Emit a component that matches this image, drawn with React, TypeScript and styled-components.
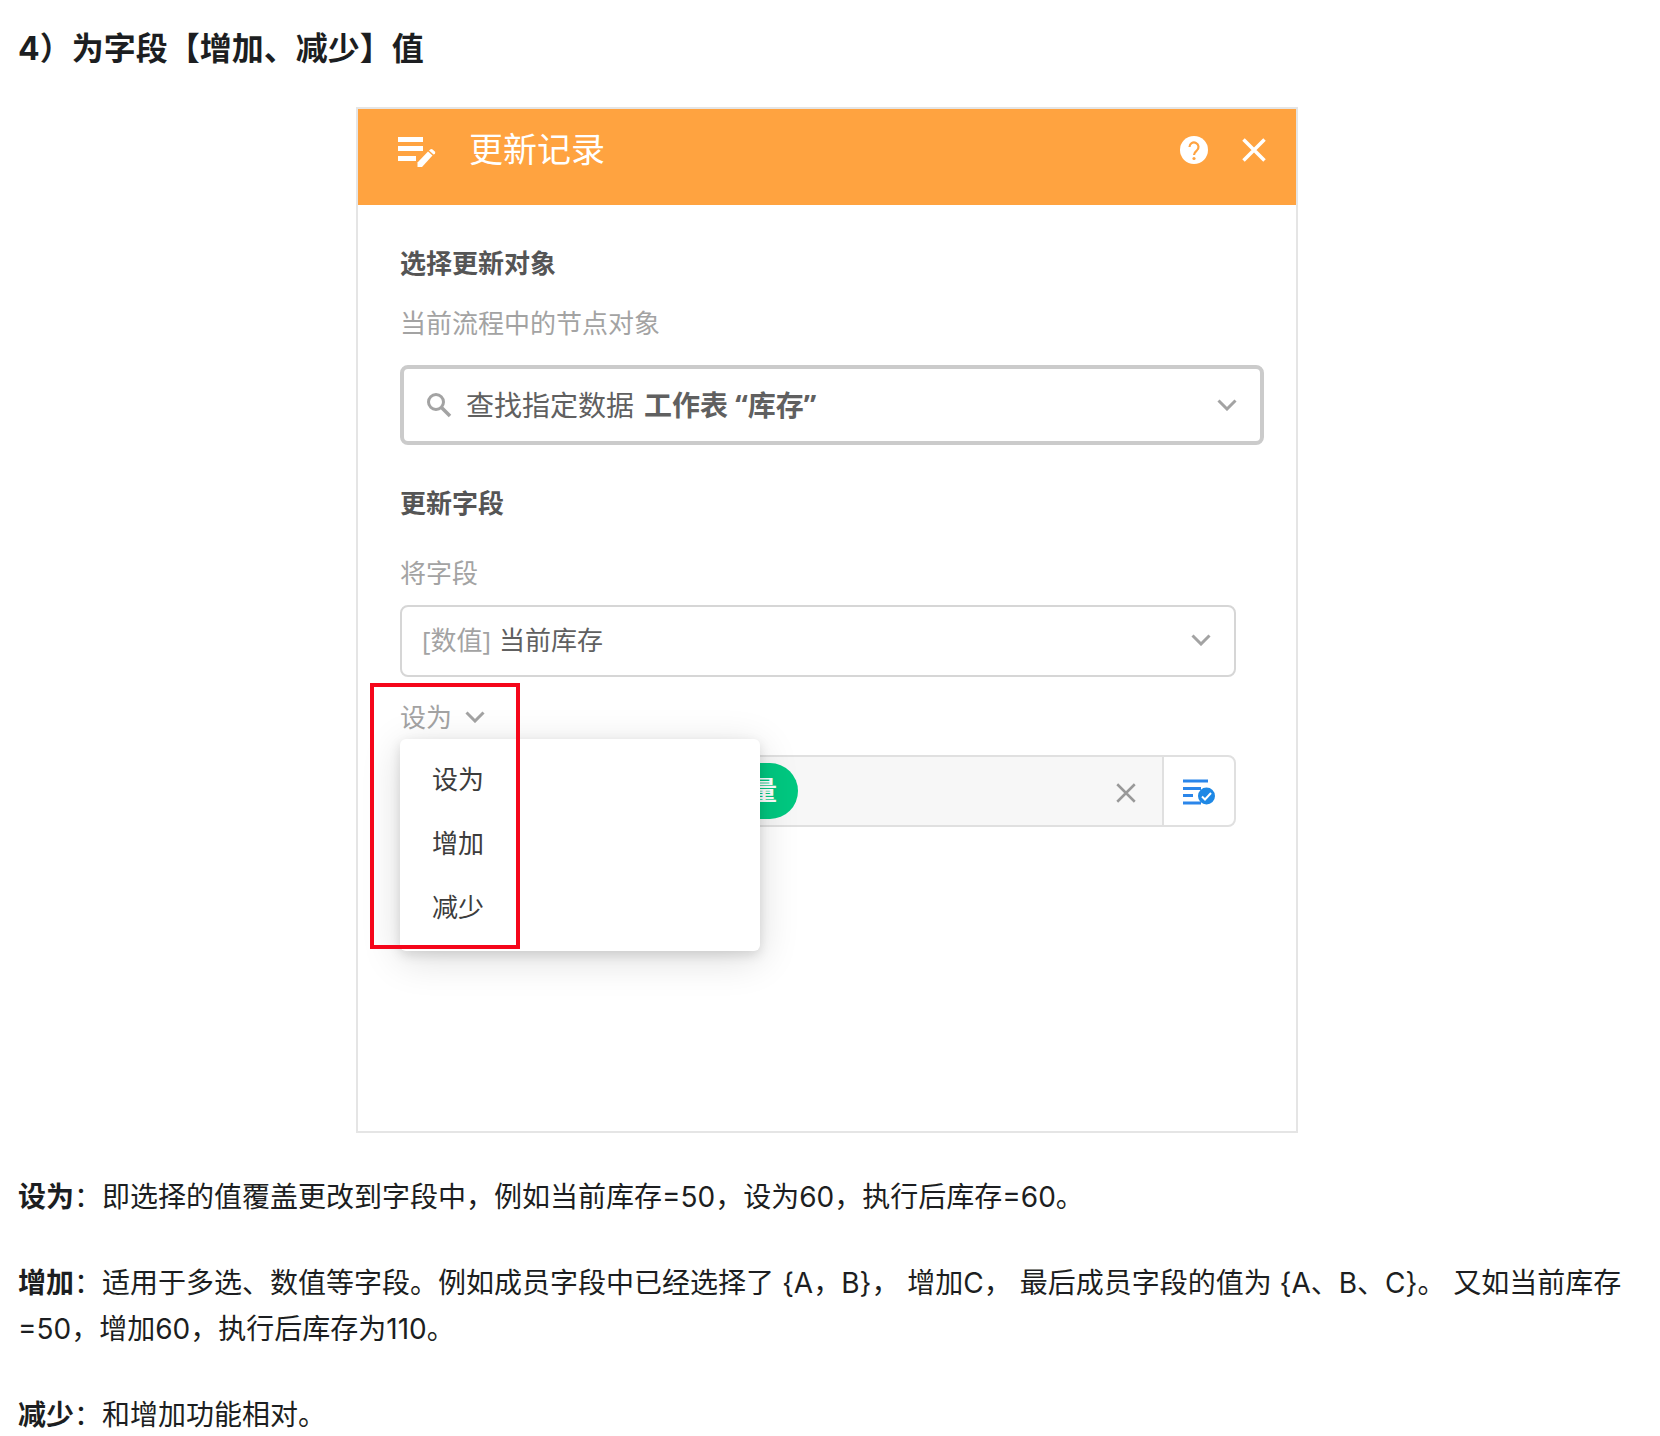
import React, { useState } from "react";
import styled, { createGlobalStyle } from "styled-components";

const GlobalStyle = createGlobalStyle`
  *, *::before, *::after { box-sizing: border-box; }
  body {
    margin: 0;
    background: #fff;
    color: #1c1e21;
    font-family: Inter, "Noto Sans CJK SC", sans-serif;
  }
  button, select, input { font: inherit; color: inherit; }
`;

const Article = styled.main`
  padding: 26px 24px 0 18px;
`;

const Heading = styled.h3`
  margin: 0 0 35px;
  font-size: 32px;
  line-height: 46px;
  font-weight: 700;
`;

const Description = styled.div`
  display: grid;
  gap: 40px;
  margin-top: 41px;
`;

const Paragraph = styled.p`
  margin: 0;
  font-size: 28px;
  line-height: 46px;
`;

const Panel = styled.section`
  width: 100%;
  max-width: 942px;
  margin: 0 auto;
  border: 2px solid #e5e5e5;
  background: #fff;
  font-family: "Open Sans", "Noto Sans CJK SC", sans-serif;
`;

const PanelHeader = styled.header`
  display: flex;
  align-items: center;
  height: 96px;
  padding: 0 30px 14px 38px;
  background: #ffa340;
  color: #fff;
`;

const PanelTitle = styled.h4`
  flex: 1;
  margin: 0 0 2px 33px;
  font-size: 34px;
  line-height: 48px;
  font-weight: 400;
`;

const IconButton = styled.button<{ $gap?: number }>`
  display: flex;
  align-items: center;
  justify-content: center;
  padding: 0;
  margin-left: ${(p) => p.$gap ?? 0}px;
  border: 0;
  background: none;
  cursor: pointer;
`;

const PanelBody = styled.div`
  padding: 40px 32px 304px 42px;
`;

const SectionTitle = styled.h5<{ $top?: number }>`
  margin: ${(p) => p.$top ?? 0}px 0 0;
  font-size: 26px;
  line-height: 36px;
  font-weight: 700;
  color: #555;
`;

const Hint = styled.label<{ $top: number; $bottom: number }>`
  display: block;
  margin: ${(p) => p.$top}px 0 ${(p) => p.$bottom}px;
  font-size: 26px;
  line-height: 36px;
  color: #a3a3a3;
`;

const FieldGroup = styled.div`
  margin-right: 28px;
`;

const SelectBox = styled.div<{ $strong?: boolean }>`
  display: flex;
  align-items: center;
  height: ${(p) => (p.$strong ? 80 : 72)}px;
  padding: ${(p) => (p.$strong ? "0 23px 0 22px" : "0 23px 2px 20px")};
  border: ${(p) => (p.$strong ? "4px solid #cbcbcb" : "2px solid #d6d6d6")};
  border-radius: 8px;
  font-size: ${(p) => (p.$strong ? 28 : 26)}px;
  line-height: 40px;
  color: #606060;
`;

const Prefix = styled.span<{ $muted?: boolean }>`
  margin-left: ${(p) => (p.$muted ? 0 : 14)}px;
  margin-right: ${(p) => (p.$muted ? 8 : 10)}px;
  color: ${(p) => (p.$muted ? "#a3a3a3" : "inherit")};
`;

const Select = styled.select<{ $bold?: boolean }>`
  flex: 1;
  min-width: 0;
  height: 44px;
  padding: 0;
  border: 0;
  outline: 0;
  appearance: none;
  background: none;
  font-weight: ${(p) => (p.$bold ? 700 : 400)};
`;

const Operator = styled.div`
  position: relative;
  margin: 22px 0 20px;
`;

const OperatorButton = styled.button`
  display: flex;
  align-items: center;
  gap: 13px;
  padding: 0;
  border: 0;
  background: none;
  font-size: 26px;
  line-height: 36px;
  color: #a3a3a3;
  cursor: pointer;
`;

const Menu = styled.ul`
  position: absolute;
  z-index: 2;
  top: 40px;
  left: 0;
  width: 360px;
  margin: 0;
  padding: 8px 0 12px;
  list-style: none;
  border-radius: 6px;
  background: #fff;
  box-shadow: 0 8px 40px rgba(0, 0, 0, 0.14), 0 4px 12px rgba(0, 0, 0, 0.12);
`;

const MenuItem = styled.button`
  display: block;
  width: 100%;
  height: 64px;
  padding: 0 32px;
  border: 0;
  background: none;
  text-align: left;
  font-size: 26px;
  line-height: 36px;
  color: #3c3c3c;
  cursor: pointer;
`;

const Highlight = styled.div`
  position: absolute;
  z-index: 3;
  top: -16px;
  left: -30px;
  width: 150px;
  height: 266px;
  border: 4px solid #f5061a;
  pointer-events: none;
`;

const ValueRow = styled.div`
  display: flex;
  height: 72px;
  border: 2px solid #e0e0e0;
  border-radius: 8px;
  overflow: hidden;
`;

const ValueField = styled.div`
  flex: 1;
  display: flex;
  align-items: center;
  padding: 0 26px 0 6px;
  background: #f7f7f7;
`;

const Tag = styled.span`
  display: flex;
  justify-content: flex-end;
  width: 390px;
  padding: 9px 21px 11px;
  border-radius: 28px;
  background: #00c880;
  color: #fff;
  font-size: 26px;
  line-height: 36px;
  font-weight: 700;
`;

const ValueInput = styled.input`
  flex: 1;
  min-width: 0;
  height: 44px;
  border: 0;
  outline: 0;
  background: none;
`;

const ClearButton = styled(IconButton)`
  padding-top: 4px;
`;

const PickerCell = styled.div`
  display: flex;
  align-items: center;
  justify-content: center;
  width: 72px;
  padding-top: 2px;
  border-left: 2px solid #e0e0e0;
`;

const Chevron = () => (
  <svg width="20" height="12" viewBox="0 0 20 12" fill="none" stroke="#a3a3a3" strokeWidth="3" aria-hidden="true">
    <path d="M1.5 1.5 10 10 18.500 1.5" />
  </svg>
);

const Cross = ({ size, color, width }: { size: number; color: string; width: number }) => (
  <svg width={size} height={size} viewBox="0 0 24 24" fill="none" stroke={color} strokeWidth={width} aria-hidden="true">
    <path d="M1.500 1.500 22.500 22.500M22.500 1.500 1.500 22.500" />
  </svg>
);

const EditListIcon = () => (
  <svg width="40" height="34" viewBox="0 0 40 34" fill="#fff" aria-hidden="true">
    <path d="M2 4h25v5H2zM2 13h25v5H2zM2 23h18v5H2z" />
    <path d="M21.500 29.500 32 18.500 36.500 22.500 26 34 21.500 34z" />
    <path d="M33 17.500 34.200 16.500q1.200-1 2.400 0l2.200 2q1 1.200 0 2.400L37.500 21.500z" />
  </svg>
);

const HelpIcon = () => (
  <svg width="28" height="28" viewBox="0 0 28 28" aria-hidden="true">
    <circle cx="14" cy="14" r="14" fill="#fff" />
    <path d="M9.500 11a4.500 4.500 0 1 1 7.300 3.500C15 15.900 14 16.500 14 19" fill="none" stroke="#ffa340" strokeWidth="2.200" />
    <circle cx="14" cy="22.500" r="1.600" fill="#ffa340" />
  </svg>
);

const SearchIcon = () => (
  <svg width="26" height="26" viewBox="0 0 26 26" fill="none" stroke="#a3a3a3" aria-hidden="true">
    <circle cx="10" cy="10" r="7.500" strokeWidth="3" />
    <path d="M15.500 15.500 24 24" strokeWidth="3.500" />
  </svg>
);

const ListCheckIcon = () => (
  <svg width="34" height="28" viewBox="0 0 34 28" aria-hidden="true">
    <path d="M1 1.500h25v3H1zM1 9h18v3H1zM1 16h10v3H1zM1 23.500h18v3H1z" fill="#2b86ea" />
    <circle cx="24.500" cy="18" r="8.500" fill="#1e88e5" />
    <path d="M20 18.500 23 21.500 29 15" fill="none" stroke="#fff" strokeWidth="2" />
  </svg>
);

const operators = ["设为", "增加", "减少"];

export default function App() {
  const [operator, setOperator] = useState(operators[0]);
  const [open, setOpen] = useState(true);

  return (
    <>
      <GlobalStyle />
      <Article>
        <Heading>4）为字段【增加、减少】值</Heading>

        <Panel>
          <PanelHeader>
            <EditListIcon />
            <PanelTitle>更新记录</PanelTitle>
            <IconButton type="button" aria-label="帮助">
              <HelpIcon />
            </IconButton>
            <IconButton type="button" aria-label="关闭" $gap={34}>
              <Cross size={24} color="#fff" width={3.5} />
            </IconButton>
          </PanelHeader>

          <PanelBody>
            <SectionTitle>选择更新对象</SectionTitle>
            <Hint htmlFor="target" $top={24} $bottom={24}>当前流程中的节点对象</Hint>
            <SelectBox $strong>
              <SearchIcon />
              <Prefix>查找指定数据</Prefix>
              <Select id="target" $bold>
                <option>工作表 “库存”</option>
              </Select>
              <Chevron />
            </SelectBox>

            <SectionTitle $top={40}>更新字段</SectionTitle>
            <FieldGroup>
              <Hint htmlFor="field" $top={34} $bottom={14}>将字段</Hint>
              <SelectBox>
                <Prefix $muted>[数值]</Prefix>
                <Select id="field">
                  <option>当前库存</option>
                </Select>
                <Chevron />
              </SelectBox>

              <Operator>
                <OperatorButton type="button" aria-expanded={open} onClick={() => setOpen(!open)}>
                  {operator}
                  <Chevron />
                </OperatorButton>
                {open && (
                  <Menu>
                    {operators.map((name) => (
                      <li key={name}>
                        <MenuItem
                          type="button"
                          onClick={() => {
                            setOperator(name);
                            setOpen(false);
                          }}
                        >
                          {name}
                        </MenuItem>
                      </li>
                    ))}
                  </Menu>
                )}
                <Highlight />
              </Operator>

              <ValueRow>
                <ValueField>
                  <Tag>量</Tag>
                  <ValueInput type="text" aria-label="值" />
                  <ClearButton type="button" aria-label="清除">
                    <Cross size={20} color="#999" width={3} />
                  </ClearButton>
                </ValueField>
                <PickerCell>
                  <IconButton type="button" aria-label="选择字段">
                    <ListCheckIcon />
                  </IconButton>
                </PickerCell>
              </ValueRow>
            </FieldGroup>
          </PanelBody>
        </Panel>

        <Description>
          <Paragraph>
            <strong>设为</strong>：即选择的值覆盖更改到字段中，例如当前库存=50，设为60，执行后库存=60。
          </Paragraph>
          <Paragraph>
            <strong>增加</strong>：适用于多选、数值等字段。例如成员字段中已经选择了 {"{A，B}"}， 增加C， 最后成员字段的值为 {"{A、B、C}"}。 又如当前库存=50，增加60，执行后库存为110。
          </Paragraph>
          <Paragraph>
            <strong>减少</strong>：和增加功能相对。
          </Paragraph>
        </Description>
      </Article>
    </>
  );
}
